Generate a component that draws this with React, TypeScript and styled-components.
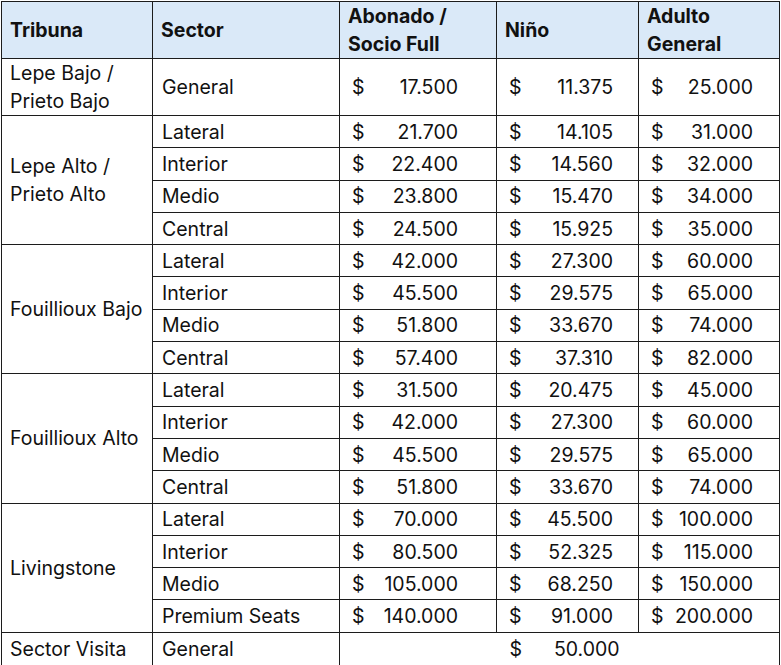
import React from 'react';
import styled, { createGlobalStyle } from 'styled-components';

const GlobalStyle = createGlobalStyle`
  body {
    margin: 0;
    background: #fff;
    font-family: Inter, "Liberation Sans", Arial, sans-serif;
  }
`;

const Wrap = styled.div`
  padding: 1px 0 0 1px;
`;

const Table = styled.table`
  border-collapse: collapse;
  table-layout: fixed;
  width: 778px;
  color: #111;
  font-size: 19.5px;
  line-height: 28px;

  td, th {
    border: 1.5px solid #1c1c1c;
  }
`;

const HeadRow = styled.tr`
  height: 56px;
  background: #dae9f8;
`;

const Th = styled.th`
  text-align: left;
  font-weight: 700;
  padding: 0 6px 0 8px;
  vertical-align: middle;
`;

const Row = styled.tr<{ $h: number }>`
  height: ${p => p.$h}px;
`;

const Cell = styled.td`
  padding: 0 6px 0 9px;
  vertical-align: middle;
  white-space: nowrap;
`;

const TribunaCell = styled(Cell)`
  padding-left: 8px;
  white-space: normal;
`;

const PriceCell = styled.td<{ $pr: number }>`
  padding: 0 ${p => p.$pr}px 0 12px;
  vertical-align: middle;
`;

const Price = styled.div`
  display: flex;
  justify-content: space-between;
`;

const MergedCell = styled.td`
  vertical-align: middle;
  padding: 0;
`;

const Centered = styled.div`
  display: flex;
  justify-content: center;
  gap: 32px;
  padding-left: 10px;
`;

type Line = { sector: string; prices: [string, string, string] };
type Group = { tribuna: React.ReactNode; h: number; lines: Line[] };

const groups: Group[] = [
  {
    tribuna: <>Lepe Bajo /<br />Prieto Bajo</>,
    h: 57,
    lines: [{ sector: 'General', prices: ['17.500', '11.375', '25.000'] }],
  },
  {
    tribuna: <>Lepe Alto /<br />Prieto Alto</>,
    h: 32.3,
    lines: [
      { sector: 'Lateral', prices: ['21.700', '14.105', '31.000'] },
      { sector: 'Interior', prices: ['22.400', '14.560', '32.000'] },
      { sector: 'Medio', prices: ['23.800', '15.470', '34.000'] },
      { sector: 'Central', prices: ['24.500', '15.925', '35.000'] },
    ],
  },
  {
    tribuna: 'Fouillioux Bajo',
    h: 32.3,
    lines: [
      { sector: 'Lateral', prices: ['42.000', '27.300', '60.000'] },
      { sector: 'Interior', prices: ['45.500', '29.575', '65.000'] },
      { sector: 'Medio', prices: ['51.800', '33.670', '74.000'] },
      { sector: 'Central', prices: ['57.400', '37.310', '82.000'] },
    ],
  },
  {
    tribuna: 'Fouillioux Alto',
    h: 32.3,
    lines: [
      { sector: 'Lateral', prices: ['31.500', '20.475', '45.000'] },
      { sector: 'Interior', prices: ['42.000', '27.300', '60.000'] },
      { sector: 'Medio', prices: ['45.500', '29.575', '65.000'] },
      { sector: 'Central', prices: ['51.800', '33.670', '74.000'] },
    ],
  },
  {
    tribuna: 'Livingstone',
    h: 32.3,
    lines: [
      { sector: 'Lateral', prices: ['70.000', '45.500', '100.000'] },
      { sector: 'Interior', prices: ['80.500', '52.325', '115.000'] },
      { sector: 'Medio', prices: ['105.000', '68.250', '150.000'] },
      { sector: 'Premium Seats', prices: ['140.000', '91.000', '200.000'] },
    ],
  },
];

const pads = [38, 25, 26];

const App = () => (
  <Wrap>
    <GlobalStyle />
    <Table>
      <colgroup>
        <col style={{ width: 151 }} />
        <col style={{ width: 187 }} />
        <col style={{ width: 157 }} />
        <col style={{ width: 142 }} />
        <col style={{ width: 141 }} />
      </colgroup>
      <thead>
        <HeadRow>
          <Th>Tribuna</Th>
          <Th>Sector</Th>
          <Th>Abonado /<br />Socio Full</Th>
          <Th>Niño</Th>
          <Th>Adulto<br />General</Th>
        </HeadRow>
      </thead>
      <tbody>
        {groups.map((g, gi) =>
          g.lines.map((l, li) => (
            <Row key={`${gi}-${li}`} $h={g.h}>
              {li === 0 && (
                <TribunaCell rowSpan={g.lines.length}>{g.tribuna}</TribunaCell>
              )}
              <Cell>{l.sector}</Cell>
              {l.prices.map((p, pi) => (
                <PriceCell key={pi} $pr={pads[pi]}>
                  <Price>
                    <span>$</span>
                    <span>{p}</span>
                  </Price>
                </PriceCell>
              ))}
            </Row>
          ))
        )}
        <Row $h={34}>
          <TribunaCell>Sector Visita</TribunaCell>
          <Cell>General</Cell>
          <MergedCell colSpan={3}>
            <Centered>
              <span>$</span>
              <span>50.000</span>
            </Centered>
          </MergedCell>
        </Row>
      </tbody>
    </Table>
  </Wrap>
);

export default App;
